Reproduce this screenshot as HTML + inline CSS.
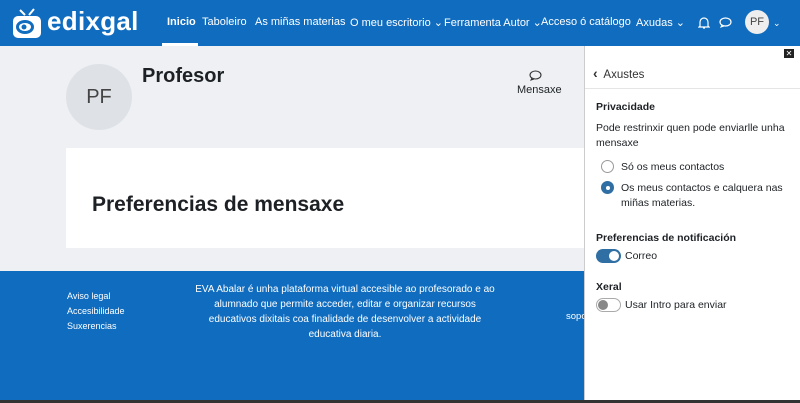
<!DOCTYPE html><html><head><meta charset="utf-8"><style>
*{margin:0;padding:0;box-sizing:border-box}
body{width:800px;height:403px;overflow:hidden;font-family:"Liberation Sans",sans-serif;background:#eef0f3;position:relative;color:#1d2125}
.hdr{position:absolute;left:0;top:0;width:800px;height:46px;background:#0f6cbf;color:#fff;font-size:11px}
.hdr span{position:absolute;top:16px;white-space:nowrap}
.a{position:absolute}
.ft{position:absolute;left:0;top:271px;width:800px;height:130px;background:#0f6cbf;color:#fff;font-size:9.5px}
</style></head><body>
<div class="hdr">
<svg class="a" style="left:10px;top:6px" width="34" height="34" viewBox="0 0 34 34"><path d="M10 4l5 5M24 3l-5 6" stroke="#fff" stroke-width="2"/><rect x="3" y="10" width="28" height="22" rx="5" fill="#fff"/><ellipse cx="15" cy="21" rx="9" ry="7" fill="#0f6cbf"/><ellipse cx="15" cy="21" rx="6" ry="4" fill="#fff"/><circle cx="14" cy="21" r="2.5" fill="#0f6cbf"/></svg>
<span style="left:47px;top:6px;font-size:26px;font-weight:bold;letter-spacing:0.3px">edixgal</span>
<span style="left:167px;font-weight:bold">Inicio</span>
<div class="a" style="left:162px;top:43px;width:36px;height:3px;background:#fff"></div>
<span style="left:202px">Taboleiro</span>
<span style="left:255px">As miñas materias</span>
<span style="left:350px">O meu escritorio ⌄</span>
<span style="left:444px">Ferramenta Autor ⌄</span>
<span style="left:541px">Acceso ó catálogo</span>
<span style="left:636px">Axudas ⌄</span>
<svg class="a" style="left:698px;top:16px" width="12" height="13" viewBox="0 0 12 13"><path d="M2 10V6a4 4 0 018 0v4l1 1H1zM5 12h2" fill="none" stroke="#fff" stroke-width="1.2"/></svg>
<svg class="a" style="left:719px;top:17px" width="13" height="11" viewBox="0 0 13 11"><ellipse cx="6.5" cy="5" rx="5.5" ry="4" fill="none" stroke="#fff" stroke-width="1.2"/><path d="M3 8l-1 2 3-1" fill="none" stroke="#fff"/></svg>
<div class="a" style="left:745px;top:10px;width:24px;height:24px;border-radius:50%;background:#eee;color:#444;font-size:11px;text-align:center;line-height:24px">PF</div>
<span style="left:773px;font-size:9px;top:18px">⌄</span>
</div>
<div class="a" style="left:66px;top:64px;width:66px;height:66px;border-radius:50%;background:#dee2e6;color:#444;font-size:20px;text-align:center;line-height:66px">PF</div>
<div class="a" style="left:142px;top:65px;font-size:20px;font-weight:bold">Profesor</div>
<svg class="a" style="left:529px;top:70px" width="13" height="11" viewBox="0 0 13 11"><ellipse cx="6.5" cy="5" rx="5.5" ry="4" fill="none" stroke="#333" stroke-width="1.1"/><path d="M3 8l-1 2 3-1" fill="none" stroke="#333"/></svg>
<div class="a" style="left:517px;top:84px;font-size:11px">Mensaxe</div>
<div class="a" style="left:66px;top:148px;width:520px;height:100px;background:#fff"></div>
<div class="a" style="left:92px;top:193px;font-size:21px;font-weight:bold">Preferencias de mensaxe</div>
<div class="ft">
<div class="a" style="left:67px;top:18px;line-height:15px;font-size:9px">Aviso legal<br>Accesibilidade<br>Suxerencias</div>
<div class="a" style="left:190px;top:11px;width:310px;text-align:center;line-height:15px;font-size:10px">EVA Abalar é unha plataforma virtual accesible ao profesorado e ao alumnado que permite acceder, editar e organizar recursos educativos dixitais coa finalidade de desenvolver a actividade educativa diaria.</div>
<div class="a" style="left:566px;top:40px">sopo</div>
</div>
<div class="a" style="left:0;top:400px;width:800px;height:3px;background:#333"></div>
<div class="a" style="left:584px;top:46px;width:216px;height:354px;background:#fff;border-left:1px solid #ccc;font-size:10.5px;color:#1d2125">
<div class="a" style="right:6px;top:3px;width:10px;height:9px;background:#222;color:#fff;font-size:8px;line-height:9px;text-align:center">✕</div>
<div class="a" style="left:8px;top:19px;font-size:11.5px;color:#333"><b style="font-size:14px">‹</b>&nbsp; Axustes</div>
<div class="a" style="left:0;top:42px;width:216px;height:1px;background:#e5e5e5"></div>
<div class="a" style="left:11px;top:55px;font-weight:bold">Privacidade</div>
<div class="a" style="left:11px;top:75px;line-height:15px;width:200px">Pode restrinxir quen pode enviarlle unha mensaxe</div>
<div class="a" style="left:16px;top:114px;width:13px;height:13px;border-radius:50%;border:1px solid #999"></div>
<div class="a" style="left:36px;top:115px">Só os meus contactos</div>
<div class="a" style="left:16px;top:135px;width:13px;height:13px;border-radius:50%;background:#2f6fa3;border:1px solid #2f6fa3"><div style="margin:3.5px;width:4px;height:4px;border-radius:50%;background:#fff"></div></div>
<div class="a" style="left:36px;top:135px;line-height:15px">Os meus contactos e calquera nas<br>miñas materias.</div>
<div class="a" style="left:11px;top:186px;font-weight:bold">Preferencias de notificación</div>
<div class="a" style="left:11px;top:203px;width:25px;height:14px;border-radius:7px;background:#2f6fa3"><div style="position:absolute;right:2px;top:2px;width:10px;height:10px;border-radius:50%;background:#fff"></div></div>
<div class="a" style="left:40px;top:204px">Correo</div>
<div class="a" style="left:11px;top:235px;font-weight:bold">Xeral</div>
<div class="a" style="left:11px;top:252px;width:25px;height:14px;border-radius:7px;border:1px solid #aaa"><div style="position:absolute;left:1px;top:1px;width:10px;height:10px;border-radius:50%;background:#888"></div></div>
<div class="a" style="left:40px;top:253px">Usar Intro para enviar</div>
</div>
</body></html>
